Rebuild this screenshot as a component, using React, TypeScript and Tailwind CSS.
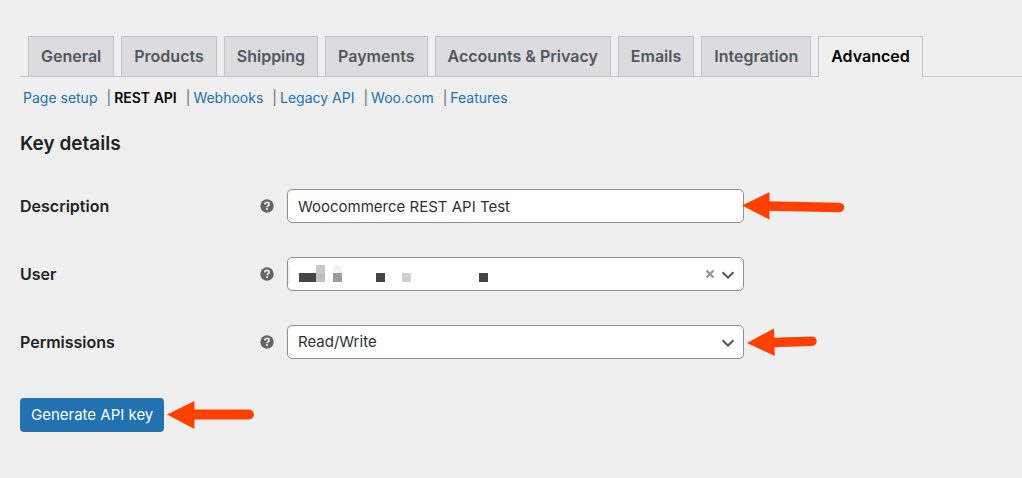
import React, { useState } from "react";
import type { ReactNode } from "react";

const tabs = [
  "General",
  "Products",
  "Shipping",
  "Payments",
  "Accounts & Privacy",
  "Emails",
  "Integration",
  "Advanced",
];

const sections = [
  "Page setup",
  "REST API",
  "Webhooks",
  "Legacy API",
  "Woo.com",
  "Features",
];

const HelpTip = () => (
  <svg viewBox="0 0 14 14" className="size-[14px] shrink-0" aria-hidden="true">
    <circle cx="7" cy="7" r="6.7" fill="#646464" />
    <path
      d="M4.9 5.4C4.9 4.1 5.8 3.4 7 3.4s2.1.7 2.1 1.8c0 1.5-2 1.5-2 3"
      fill="none"
      stroke="#efefef"
      strokeWidth="1.7"
    />
    <rect x="6.1" y="9.2" width="1.9" height="1.7" fill="#efefef" />
  </svg>
);

const Chevron = () => (
  <svg
    viewBox="0 0 14 8"
    className="pointer-events-none absolute top-[14px] right-[9px] h-2 w-[14px]"
    aria-hidden="true"
  >
    <path d="M1.5 1.2 7 6.5l5.5-5.3" fill="none" stroke="#50575e" strokeWidth="2" />
  </svg>
);

// blocked out user name
const HiddenName = () => (
  <svg
    viewBox="0 0 240 32"
    className="pointer-events-none absolute top-px left-px h-8 w-[240px]"
    aria-hidden="true"
    shapeRendering="crispEdges"
  >
    <rect x="0" y="7" width="2" height="19" fill="#f1f1f1" />
    <rect x="11" y="15" width="17" height="9" fill="#454545" />
    <rect x="28" y="7" width="9" height="8" fill="#c8c8c8" />
    <rect x="28" y="15" width="9" height="9" fill="#c0c0c0" />
    <rect x="45" y="7" width="9" height="8" fill="#f4f4f4" />
    <rect x="45" y="15" width="9" height="9" fill="#9c9c9c" />
    <rect x="88" y="15" width="9" height="9" fill="#454545" />
    <rect x="114" y="15" width="9" height="9" fill="#d0d0d0" />
    <rect x="191" y="15" width="9" height="9" fill="#454545" />
  </svg>
);

type FieldProps = { id: string; label: string; children: ReactNode };

const Field = ({ id, label, children }: FieldProps) => (
  <div className="flex items-center">
    <label htmlFor={id} className="w-60 shrink-0 text-[16px] font-semibold">
      {label}
    </label>
    <HelpTip />
    <div className="relative ml-[13px] w-full max-w-[457px]">{children}</div>
  </div>
);

const control =
  "block h-[34px] w-full appearance-none rounded-[5px] border border-[#8c8f94] bg-white px-[10px] text-[15px] text-[#2c3338] outline-none";

const App = () => {
  const [description, setDescription] = useState("Woocommerce REST API Test");
  const [permissions, setPermissions] = useState("read_write");

  return (
    <div className="min-h-screen overflow-x-hidden bg-[#efefef] pt-9 pb-11 pl-5 font-[Inter,sans-serif] text-[15px] leading-5 text-[#1d2327]">
      <nav className="flex gap-[7px] border-b border-[#c3c4c7] pl-2 whitespace-nowrap">
        {tabs.map((tab) => (
          <a
            key={tab}
            href="#"
            className={
              tab === "Advanced"
                ? "-mb-px border border-b-0 border-[#c3c4c7] bg-[#efefef] px-3 pt-[9px] pb-[11px] text-[16px] font-semibold text-black"
                : "border border-b-0 border-[#c3c4c7] bg-[#dcdcde] px-3 pt-[9px] pb-[10px] text-[16px] font-semibold text-[#50575e]"
            }
          >
            {tab}
          </a>
        ))}
      </nav>

      <ul className="flex pt-[11px] pl-[3px] text-[14px] whitespace-nowrap text-[#646970]">
        {sections.map((section, i) => (
          <li key={section}>
            {i > 0 && <span className="pr-[3px] pl-[9px]">|</span>}
            <a
              href="#"
              className={
                section === "REST API"
                  ? "font-semibold text-black"
                  : "text-[#2271b1]"
              }
            >
              {section}
            </a>
          </li>
        ))}
      </ul>

      <h2 className="pt-6 text-[19px] leading-6 font-semibold">Key details</h2>

      <form onSubmit={(e) => e.preventDefault()}>
        <div className="flex flex-col gap-[34px] pt-[33px]">
          <Field id="description" label="Description">
            <input
              id="description"
              type="text"
              className={control}
              value={description}
              onChange={(e) => setDescription(e.target.value)}
            />
            <svg
              viewBox="0 0 104 30"
              className="absolute top-px left-full -ml-[2px] h-[30px] w-[104px]"
              aria-hidden="true"
            >
              <path d="M0 15.5 27.5 2v27.5Z" fill="#ff4000" />
              <path d="M25 16 97.5 17.4" stroke="#ff4000" strokeWidth="9.5" strokeLinecap="round" />
            </svg>
          </Field>

          <Field id="user" label="User">
            <select id="user" className={control}>
              <option value="1"></option>
            </select>
            <HiddenName />
            <button
              type="button"
              aria-label="Clear"
              className="absolute top-[12px] right-[29px] size-[10px]"
            >
              <svg viewBox="0 0 10 10" className="size-[10px]">
                <path d="m1.5 1.5 7 7m0-7-7 7" stroke="#999" strokeWidth="2.4" />
              </svg>
            </button>
            <Chevron />
          </Field>

          <Field id="permissions" label="Permissions">
            <select
              id="permissions"
              className={control}
              value={permissions}
              onChange={(e) => setPermissions(e.target.value)}
            >
              <option value="read">Read</option>
              <option value="write">Write</option>
              <option value="read_write">Read/Write</option>
            </select>
            <Chevron />
            <svg
              viewBox="0 0 72 30"
              className="absolute top-[2px] left-full ml-[3px] h-[30px] w-[72px]"
              aria-hidden="true"
            >
              <path d="M0 16 27 1.5l.8 27.5Z" fill="#ff4000" />
              <path d="M25 15.5 65 14.3" stroke="#ff4000" strokeWidth="9.5" strokeLinecap="round" />
            </svg>
          </Field>
        </div>

        <div className="flex items-center gap-[3px] pt-[39px]">
          <button
            type="submit"
            className="h-[34px] rounded-[4px] bg-[#2271b1] px-[11px] text-[15px] text-white"
          >
            Generate API key
          </button>
          <svg viewBox="0 0 88 30" className="h-[30px] w-[88px]" aria-hidden="true">
            <path d="M0 14.5 27.5 1v28Z" fill="#ff4000" />
            <path d="M25 14.5H82" stroke="#ff4000" strokeWidth="9.8" strokeLinecap="round" />
          </svg>
        </div>
      </form>
    </div>
  );
};

export default App;
